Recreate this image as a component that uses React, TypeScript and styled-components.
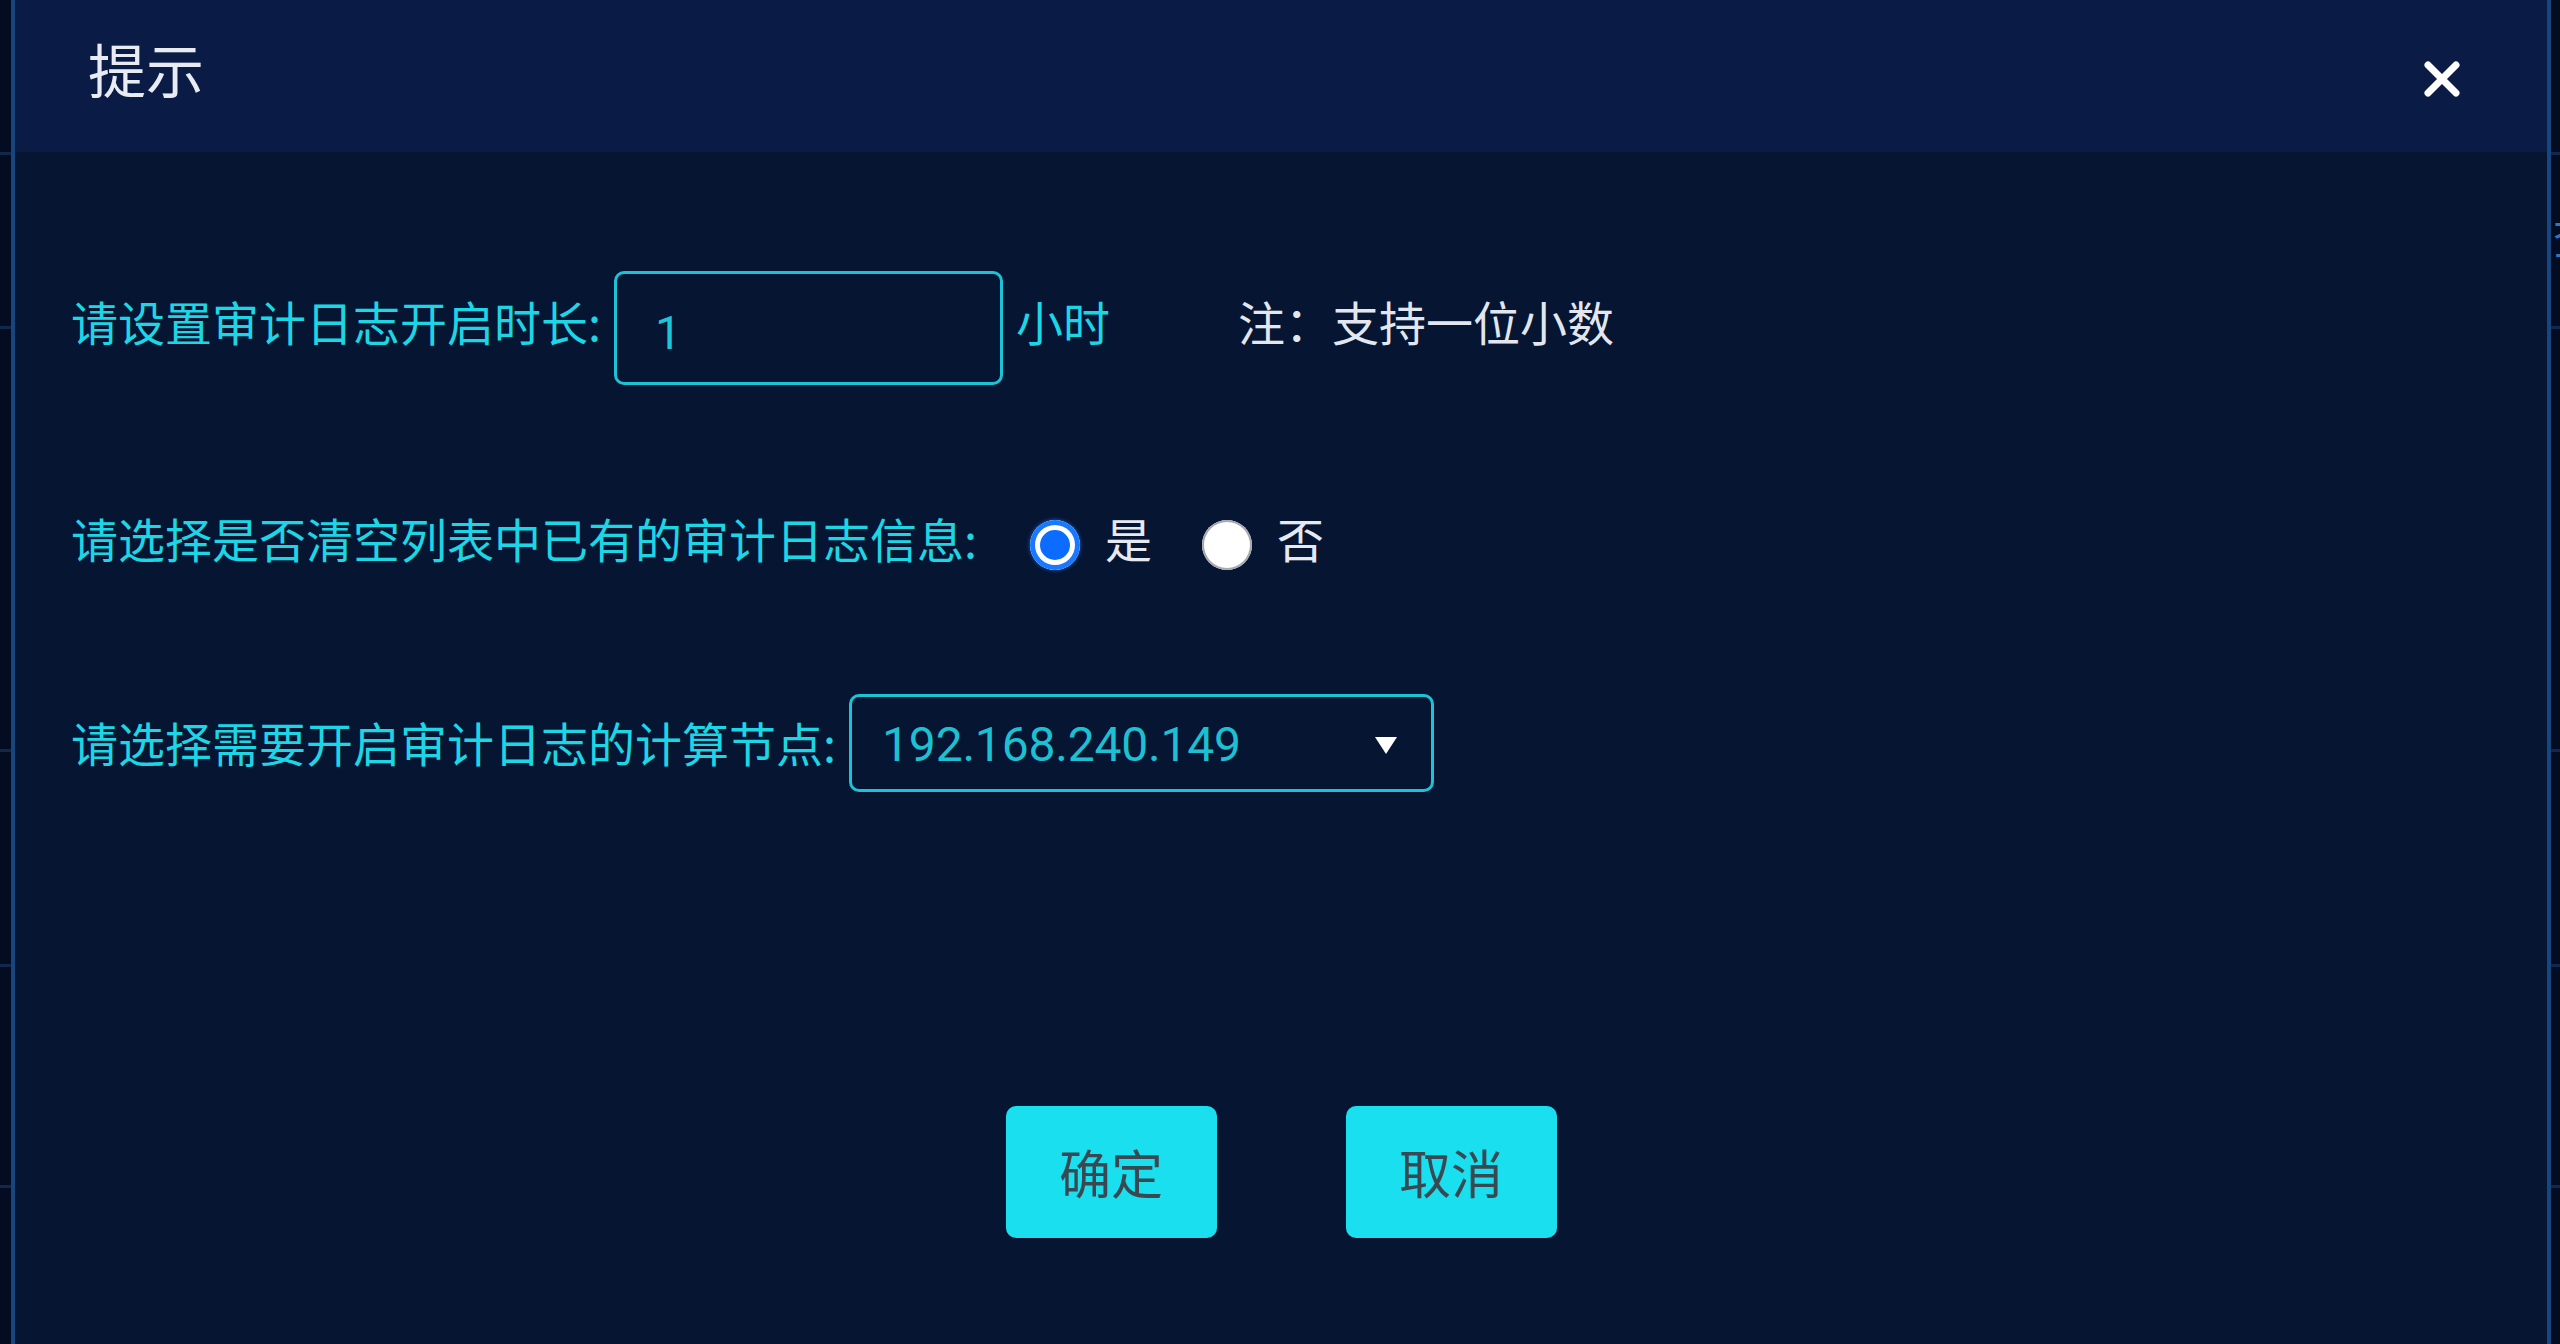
import React from "react";
import styled, { createGlobalStyle } from "styled-components";

const Global = createGlobalStyle`
  html, body { margin: 0; padding: 0; background: #040b20; }
  body { font-family: "Noto Sans CJK SC", "Noto Sans", sans-serif; }
  * { box-sizing: border-box; }
`;

const Page = styled.div`
  width: 2560px;
  height: 1344px;
  display: flex;
  overflow: hidden;
  background: #040b20;
`;

const line = (y: number) =>
  `linear-gradient(to bottom, transparent ${y}px, rgba(40, 80, 140, 0.4) ${y}px, rgba(40, 80, 140, 0.4) ${y + 3}px, transparent ${y + 3}px)`;

const SideStrip = styled.div<{ $w: number }>`
  width: ${(p) => p.$w}px;
  flex: none;
  background-color: #040c22;
  background-image: ${[152, 326, 749, 964, 1185].map(line).join(", ")};
  position: relative;
  overflow: hidden;
`;

const SideText = styled.span`
  position: absolute;
  top: 214px;
  left: 2px;
  font-size: 44px;
  line-height: 1;
  color: #2a78c0;
`;

const Dialog = styled.div`
  flex: 1;
  display: flex;
  flex-direction: column;
  background: #061532;
  border-left: 4px solid #17467f;
  border-right: 4px solid #17467f;
`;

const Header = styled.div`
  height: 152px;
  flex: none;
  background: #0a1c45;
  display: flex;
  align-items: center;
  justify-content: space-between;
  padding: 0 85px 0 73px;
`;

const Title = styled.div`
  font-size: 58px;
  line-height: 1;
  color: #e8ecf2;
  margin-bottom: 16px;
`;

const CloseButton = styled.button`
  width: 40px;
  height: 40px;
  padding: 0;
  border: none;
  background: transparent;
  display: flex;
  align-items: center;
  justify-content: center;
  cursor: pointer;
  margin-top: 6px;
`;

const Body = styled.div`
  flex: 1;
  display: flex;
  flex-direction: column;
  padding: 119px 0 0 56px;
`;

const Row = styled.div<{ $h: number; $mt: number; $lift: number }>`
  height: ${(p) => p.$h}px;
  margin-top: ${(p) => p.$mt}px;
  display: flex;
  align-items: center;
  --lift: ${(p) => p.$lift * 2}px;
`;

const Label = styled.span`
  font-size: 47px;
  line-height: 1;
  color: #1cd6e6;
  white-space: nowrap;
  margin-bottom: var(--lift);
`;

const Unit = styled(Label)`
  margin-left: 13px;
`;

const Note = styled.span`
  margin-left: 128px;
  font-size: 47px;
  line-height: 1;
  color: #e2e7ef;
  white-space: nowrap;
  margin-bottom: var(--lift);
`;

const TextInput = styled.input`
  width: 389px;
  height: 114px;
  margin-left: 13px;
  border: 3px solid #1cc3d6;
  border-radius: 10px;
  background: transparent;
  padding: 8px 0 0 38px;
  font-family: Roboto, "Noto Sans", sans-serif;
  font-size: 47px;
  color: #1cc6d8;
  outline: none;
`;

const RadioGroup = styled.div`
  display: flex;
  align-items: center;
  margin-left: 53px;
`;

const RadioItem = styled.label`
  display: flex;
  align-items: center;
  gap: 25px;
  margin-right: 50px;
  cursor: pointer;
`;

const RadioDot = styled.span<{ $checked: boolean }>`
  width: 50px;
  height: 50px;
  border-radius: 50%;
  flex: none;
  background: ${(p) => (p.$checked ? "#0b6cff" : "#ffffff")};
  box-shadow: ${(p) =>
    p.$checked
      ? "inset 0 0 0 5px #1878ff, inset 0 0 0 10px #ffffff, 0 0 4px rgba(40,130,255,0.7)"
      : "inset 0 0 0 2px #a4a9b1"};
`;

const RadioText = styled.span`
  font-size: 47px;
  line-height: 1;
  color: #e6eaf0;
  margin-bottom: var(--lift);
`;

const Select = styled.div`
  width: 585px;
  height: 98px;
  margin-left: 13px;
  border: 3px solid #1cc3d6;
  border-radius: 10px;
  display: flex;
  align-items: center;
  justify-content: space-between;
  padding: 4px 33px 0 30px;
`;

const SelectValue = styled.span`
  font-family: Roboto, "Noto Sans", sans-serif;
  font-size: 48px;
  line-height: 1;
  color: #1cc0d2;
  letter-spacing: -0.2px;
`;

const Footer = styled.div`
  margin-top: 314px;
  margin-left: -56px;
  display: flex;
  justify-content: center;
  gap: 129px;
`;

const ActionButton = styled.button`
  width: 211px;
  height: 132px;
  border: none;
  border-radius: 10px;
  background: #19dfee;
  color: #3a4852;
  font-family: "Noto Sans CJK SC", "Noto Sans", sans-serif;
  font-size: 52px;
  line-height: 1;
  cursor: pointer;
  padding: 0;
`;

export default function App() {
  return (
    <>
      <Global />
      <Page>
        <SideStrip $w={11} />
        <Dialog>
          <Header>
            <Title>提示</Title>
            <CloseButton aria-label="close">
              <svg width="38" height="38" viewBox="0 0 38 38">
                <path
                  d="M5 5 L33 33 M33 5 L5 33"
                  stroke="#ffffff"
                  strokeWidth="7"
                  strokeLinecap="round"
                />
              </svg>
            </CloseButton>
          </Header>
          <Body>
            <Row $h={114} $mt={0} $lift={8}>
              <Label>请设置审计日志开启时长:</Label>
              <TextInput defaultValue="1" />
              <Unit>小时</Unit>
              <Note>注：支持一位小数</Note>
            </Row>
            <Row $h={50} $mt={135} $lift={8}>
              <Label>请选择是否清空列表中已有的审计日志信息:</Label>
              <RadioGroup>
                <RadioItem>
                  <RadioDot $checked={true} />
                  <RadioText>是</RadioText>
                </RadioItem>
                <RadioItem>
                  <RadioDot $checked={false} />
                  <RadioText>否</RadioText>
                </RadioItem>
              </RadioGroup>
            </Row>
            <Row $h={98} $mt={124} $lift={2}>
              <Label>请选择需要开启审计日志的计算节点:</Label>
              <Select>
                <SelectValue>192.168.240.149</SelectValue>
                <svg width="24" height="20" viewBox="0 0 24 20">
                  <path d="M1 2 L23 2 L12 19 Z" fill="#ffffff" />
                </svg>
              </Select>
            </Row>
            <Footer>
              <ActionButton>确定</ActionButton>
              <ActionButton>取消</ActionButton>
            </Footer>
          </Body>
        </Dialog>
        <SideStrip $w={9}>
          <SideText>查</SideText>
        </SideStrip>
      </Page>
    </>
  );
}
